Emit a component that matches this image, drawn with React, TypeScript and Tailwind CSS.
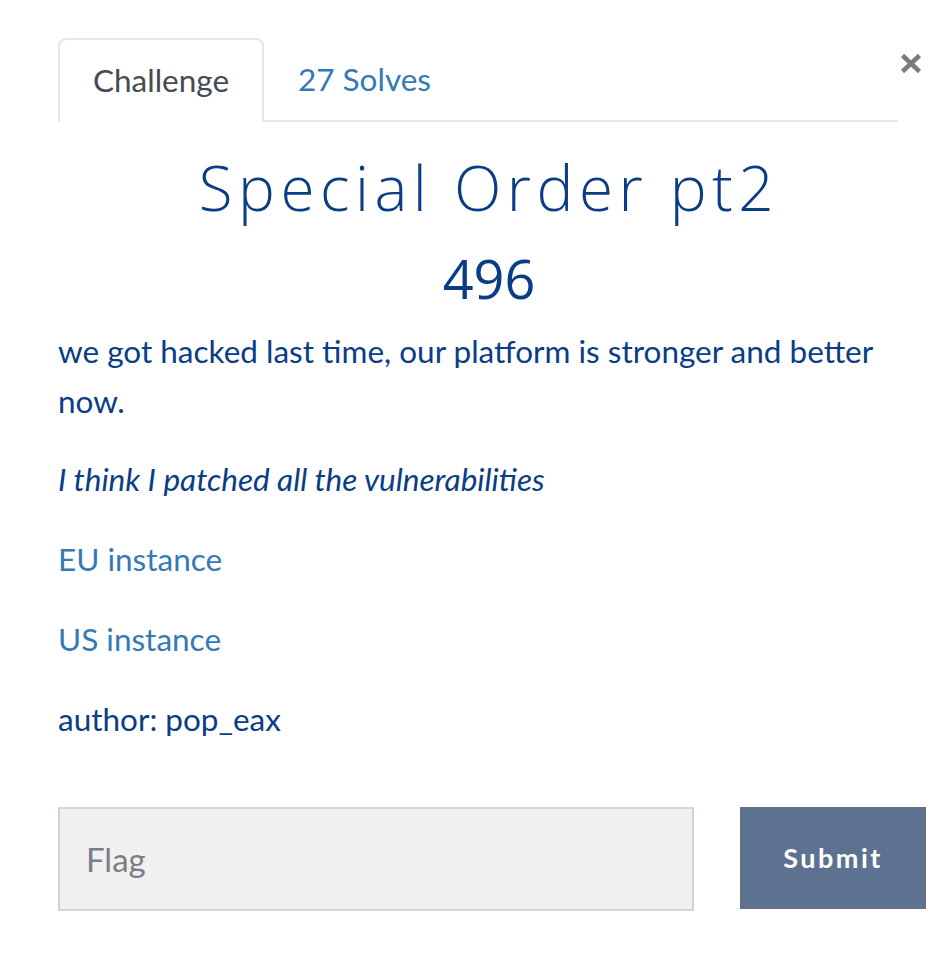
import React from 'react';

const App = () => {
  return (
    <div className="min-h-[966px] w-[930px] bg-white font-['Lato',sans-serif] pl-[58px] pt-[38px] relative">
      <button className="absolute left-[900px] top-[53px]" aria-label="Close">
        <svg width="22" height="21" viewBox="0 0 22 21">
          <path d="M2.5 2.5 L19.5 18.5 M19.5 2.5 L2.5 18.5" stroke="#7b7b7b" strokeWidth="4.5" strokeLinecap="butt" />
        </svg>
      </button>

      <div className="w-[840px] flex items-end border-b-2 border-[#e3e6ea] h-[84px]">
        <div className="w-[206px] h-[84px] -mb-[2px] border-2 border-b-0 border-[#e3e6ea] rounded-t-lg bg-white flex items-center justify-center text-[31.5px] text-[#464b52]">
          Challenge
        </div>
        <a className="h-[84px] px-[34px] pt-[3px] flex items-center text-[31.5px] text-[#337ab7]">27 Solves</a>
      </div>

      <div className="w-[862px] text-center text-[#0a3d85] pt-[24px]">
        <h1 className="font-['Open_Sans',sans-serif] font-light text-[62px] leading-[82px] tracking-[5.5px]">Special Order pt2</h1>
        <h2 className="font-['Open_Sans',sans-serif] text-[54px] leading-[70px] mt-[15px]">496</h2>
      </div>

      <div className="w-[840px] text-[31.5px] leading-[50px] text-[#0a3d85] mt-[13px]">
        <p>we got hacked last time, our platform is stronger and better now.</p>
        <p className="mt-[28px] italic">I think I patched all the vulnerabilities</p>
        <p className="mt-[30px]"><a className="text-[#337ab7]">EU instance</a></p>
        <p className="mt-[30px]"><a className="text-[#337ab7]">US instance</a></p>
        <p className="mt-[30px]">author: pop_eax</p>
      </div>

      <div className="flex mt-[63px] items-start">
        <input
          placeholder="Flag"
          className="w-[636px] h-[104px] bg-[#f0f0f0] border-2 border-[#cfd5dc] px-[26px] text-[33px] placeholder:text-[#7a7f85] outline-none"
        />
        <button className="ml-[46px] w-[186px] h-[102px] bg-[#5d7290] border border-[#6d6f72] text-white text-[27px] font-bold tracking-[2.5px]">
          Submit
        </button>
      </div>
    </div>
  );
};

export default App;
